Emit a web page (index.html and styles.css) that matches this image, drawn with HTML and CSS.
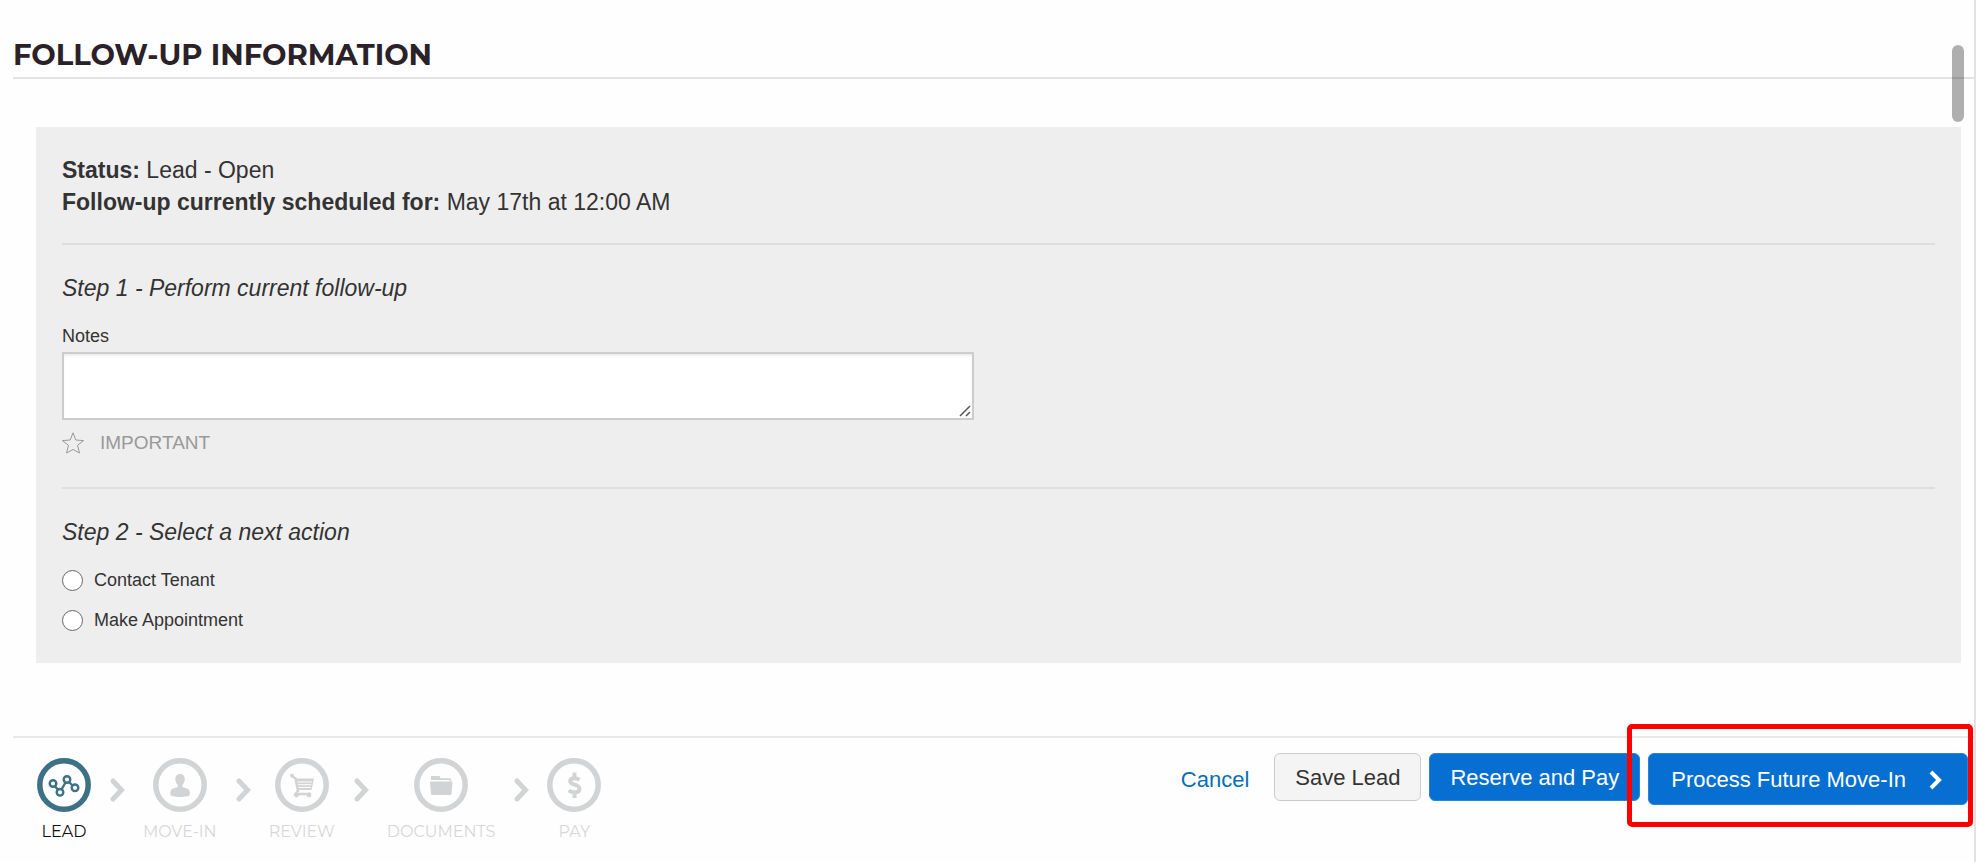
FILE: index.html
```html
<!DOCTYPE html>
<html lang="en">
<head>
    <meta charset="UTF-8">
    <title>Follow-up Information</title>
    <link rel="stylesheet" href="styles.css">
</head>
<body>
<main class="content">
    <h1 class="title">Follow-up Information</h1>
    <form class="panel" id="followUp">
        <div class="status">
            <p><strong>Status:</strong> Lead - Open</p>
            <p><strong>Follow-up currently scheduled for:</strong> May 17th at 12:00 AM</p>
        </div>
        <section class="step">
            <h2>Step 1 - Perform current follow-up</h2>
            <label class="notes-label" for="notes">Notes</label>
            <div class="notes-box">
                <textarea id="notes" name="notes"></textarea>
                <svg class="grip" width="12" height="12" viewBox="0 0 12 12"><path d="M1 11 11 1M7 11l4-4"/></svg>
            </div>
            <button type="button" class="important">
                <svg width="22" height="22" viewBox="0 0 22 22"><path d="M11 .800l2.800 7.200 7.700.600-6 4.800 2 7.600-6.500-3.500L4.500 21l2-7.600-6-4.800 7.700-.6z"/></svg>
                IMPORTANT
            </button>
        </section>
        <section class="step">
            <h2>Step 2 - Select a next action</h2>
            <label class="radio"><input type="radio" name="action" value="contact">Contact Tenant</label>
            <label class="radio"><input type="radio" name="action" value="appointment">Make Appointment</label>
        </section>
    </form>
    <div class="scroll-thumb"></div>
</main>
<footer class="footer">
    <ol class="progress">
        <li class="current">
            <svg class="icon" width="54" height="54" viewBox="0 0 54 54">
                <circle class="ring" cx="27" cy="27" r="24.200"/>
                <g class="line"><circle cx="16" cy="25.500" r="3.300"/><circle cx="23" cy="34.300" r="3.300"/><circle cx="30" cy="21.500" r="3.300"/><circle cx="38" cy="29.800" r="3.300"/><path d="M18 28.200l3 3.500M24.500 31.500l4-7M32 24l4 4"/></g>
            </svg>
            <span>LEAD</span>
        </li>
        <li class="arrow"><svg width="16" height="24" viewBox="0 0 16 24"><path d="M4 3l8.500 9L4 21"/></svg></li>
        <li>
            <svg class="icon" width="54" height="54" viewBox="0 0 54 54">
                <circle class="ring" cx="27" cy="27" r="24.200"/>
                <path class="solid" d="M27 16c3.200 0 4.800 2.200 4.800 5 0 2.500-1 4.500-2.300 5.800v2.200l5 1.800c1.500.6 2.300 2 2.300 4v2c0 1.200-4 2.200-9.800 2.200s-9.600-1-9.600-2.200v-2c0-2 .8-3.400 2.300-4l5-1.800v-2.200c-1.300-1.300-2.400-3.300-2.400-5.800 0-2.800 1.600-5 4.700-5z"/>
            </svg>
            <span>MOVE-IN</span>
        </li>
        <li class="arrow"><svg width="16" height="24" viewBox="0 0 16 24"><path d="M4 3l8.500 9L4 21"/></svg></li>
        <li>
            <svg class="icon" width="54" height="54" viewBox="0 0 54 54">
                <circle class="ring" cx="27" cy="27" r="24.200"/>
                <path class="solid" d="M20 20.500h19L36.500 32H22z"/>
                <path class="cut" d="M22 24h15M22.500 26.700h14M23 29.400h13"/>
                <g class="line"><path d="M17 18l3.500 2.500L23 33l-2.500 3H35"/></g>
                <g class="solid"><circle cx="17" cy="17.500" r="2"/><circle cx="21.500" cy="37" r="2.400"/><circle cx="34" cy="37" r="2.400"/></g>
            </svg>
            <span>REVIEW</span>
        </li>
        <li class="arrow"><svg width="16" height="24" viewBox="0 0 16 24"><path d="M4 3l8.500 9L4 21"/></svg></li>
        <li>
            <svg class="icon" width="54" height="54" viewBox="0 0 54 54">
                <circle class="ring" cx="27" cy="27" r="24.200"/>
                <path class="solid" d="M17 19q0-1 1-1h7q1 0 1 1l.5 1.200H36q1.200 0 1.200 1.500V23h-1.500v-1H17zM16 23.500h22.500L37.500 36q-.1 1-1 1H18q-.9 0-1-1z"/>
            </svg>
            <span>DOCUMENTS</span>
        </li>
        <li class="arrow"><svg width="16" height="24" viewBox="0 0 16 24"><path d="M4 3l8.500 9L4 21"/></svg></li>
        <li>
            <svg class="icon" width="54" height="54" viewBox="0 0 54 54">
                <circle class="ring" cx="27" cy="27" r="24.200"/>
                <path class="dollar" d="M32.500 21.800c-1.500-1-3.200-1.500-5-1.500-2.800 0-4.300 1.100-4.300 2.900 0 4.300 9.300 2.500 9.300 7.600 0 2.300-1.900 3.500-4.900 3.500-2.200 0-4.300-.7-6-1.900M27.500 14.500v5M27.500 35v5"/>
            </svg>
            <span>PAY</span>
        </li>
    </ol>
    <div class="actions">
        <a href="#" class="cancel">Cancel</a>
        <button type="submit" form="followUp" class="btn">Save Lead</button>
        <button type="button" class="btn btn-primary">Reserve and Pay</button>
        <div class="highlight">
            <button type="button" class="btn btn-primary btn-next">Process Future Move-In
                <svg width="14" height="20" viewBox="0 0 14 20"><path d="M2 2l8 8-8 8"/></svg>
            </button>
        </div>
    </div>
</footer>
</body>
</html>
```
FILE: styles.css
```css
* {
    box-sizing: border-box;
    margin: 0;
    padding: 0;
}

body {
    display: flex;
    flex-direction: column;
    min-height: 100vh;
    padding-left: 13px;
    border-right: 2px solid #e2e2e2;
    background: #fefefe;
    color: #333;
    font: 22px/32px "Liberation Sans", Arial, sans-serif;
}

button, textarea {
    font: inherit;
    color: inherit;
}

.content {
    position: relative;
    flex: 1;
}

.title {
    padding: 35px 0 2px;
    border-bottom: 2px solid #e2e2e2;
    color: #2a2228;
    font: bold 29px/40px Montserrat, Inter, sans-serif;
    text-transform: uppercase;
}

.panel {
    margin: 48px 13px 0 23px;
    padding: 27px 26px 31px;
    background: #eee;
}

.status {
    margin-bottom: 25px;
    font-size: 23px;
}

.step {
    padding-top: 27px;
    border-top: 2px solid #dedede;
}

.step h2 {
    margin-bottom: 20px;
    font-size: 23px;
    font-weight: normal;
    font-style: italic;
}

.notes-label {
    display: block;
    font-size: 18px;
    line-height: 24px;
}

.notes-box {
    position: relative;
    width: calc(50% - 25px);
    min-width: 300px;
    margin-top: 4px;
}

.notes-box textarea {
    display: block;
    width: 100%;
    height: 68px;
    padding: 8px;
    border: 2px solid #ccc;
    background: #fff;
    box-shadow: inset 0 2px 2px rgba(0, 0, 0, 0.07);
    resize: none;
}

.grip {
    position: absolute;
    right: 3px;
    bottom: 3px;
    fill: none;
    stroke: #555;
    stroke-width: 1.5;
}

.important {
    display: flex;
    align-items: center;
    gap: 16px;
    margin: 7px 0 28px;
    border: 0;
    background: none;
    color: #999;
    font-size: 19px;
    cursor: pointer;
}

.important svg {
    fill: none;
    stroke: #999;
    stroke-width: 1;
}

.radio {
    display: flex;
    align-items: center;
    gap: 11px;
    font-size: 18px;
    line-height: 24px;
}

.radio + .radio {
    margin-top: 16px;
}

.radio input {
    width: 21px;
    height: 21px;
    appearance: none;
    border: 1px solid #666;
    border-radius: 50%;
    background: #fff;
}

.radio input:checked {
    border: 6px solid #066fd1;
}

.scroll-thumb {
    position: absolute;
    top: 45px;
    right: 10px;
    width: 12px;
    height: 77px;
    border-radius: 6px;
    background: rgba(0, 0, 0, 0.31);
}

.footer {
    display: flex;
    justify-content: space-between;
    align-items: flex-start;
    border-top: 2px solid #e8e8e8;
}

.progress {
    display: flex;
    gap: 18px;
    padding: 20px 0 18px 24px;
    list-style: none;
    color: #d1d3d4;
    font: 16px/24px Montserrat, Inter, sans-serif;
}

.progress li {
    display: flex;
    flex-direction: column;
    align-items: center;
    gap: 8px;
}

.progress span {
    color: #d6d8d8;
}

.progress .current {
    color: #3c7186;
}

.progress .current span {
    color: #111;
}

.ring {
    fill: none;
    stroke: currentColor;
    stroke-width: 5.5;
}

.line {
    fill: none;
    stroke: currentColor;
    stroke-width: 2.4;
}

.solid {
    fill: currentColor;
}

.cut {
    stroke: #fefefe;
    stroke-width: 1;
}

.dollar {
    fill: none;
    stroke: currentColor;
    stroke-width: 4;
}

.progress .arrow {
    padding-top: 20px;
}

.arrow svg {
    fill: none;
    stroke: currentColor;
    stroke-width: 5;
    stroke-linecap: round;
}

.actions {
    display: flex;
    align-items: flex-start;
    gap: 8px;
    padding: 15px 6px 0 0;
    white-space: nowrap;
}

.cancel {
    padding: 11px 17px 0;
    color: #0670b5;
    text-decoration: none;
}

.btn {
    height: 48px;
    padding: 2px 20px 0;
    border: 1px solid #ccc;
    border-radius: 6px;
    background: #f4f4f4;
    cursor: pointer;
}

.btn-primary {
    border-color: #2c82d6;
    background: #066fd1;
    color: #fff;
}

.btn-next {
    display: flex;
    align-items: center;
    gap: 23px;
    height: 52px;
    padding: 2px 24px 0 22px;
}

.btn-next svg {
    fill: none;
    stroke: #fff;
    stroke-width: 4;
}

.highlight {
    position: relative;
}

.highlight::after {
    content: "";
    position: absolute;
    inset: -29px -5px -22px -21px;
    border: 5px solid #f00;
    border-radius: 5px;
    pointer-events: none;
}
```
